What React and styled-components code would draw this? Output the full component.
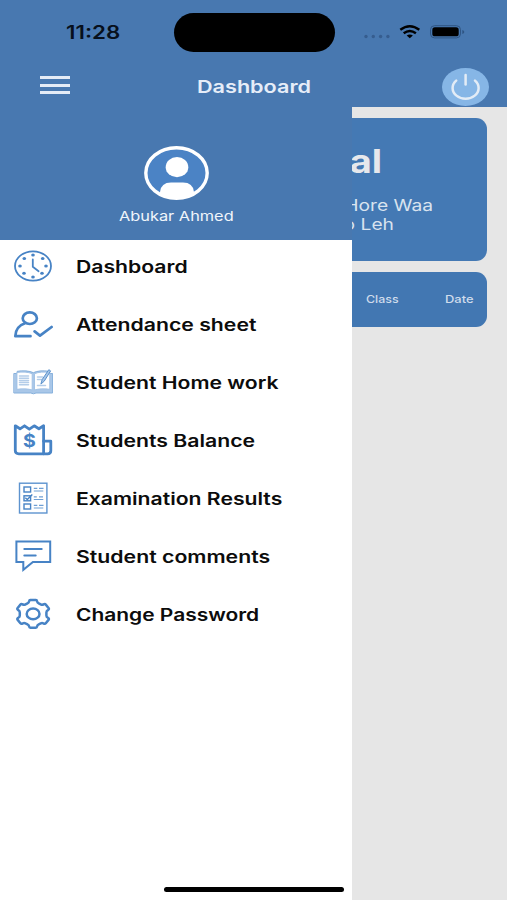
import React from "react";
import styled, { createGlobalStyle } from "styled-components";

const GlobalStyle = createGlobalStyle`
  * {
    box-sizing: border-box;
  }
  body {
    margin: 0;
    font-family: Inter, "Liberation Sans", sans-serif;
  }
`;

const Screen = styled.div`
  position: relative;
  width: 507px;
  height: 900px;
  overflow: hidden;
  background: #e6e6e6;
`;

const Header = styled.header`
  height: 107px;
  background: #4878b0;
`;

const StatusBar = styled.div`
  display: flex;
  height: 64px;
  padding-left: 66px;
  align-items: center;
`;

const Island = styled.div`
  width: 161px;
  height: 39px;
  border-radius: 20px;
  background: #000;
`;

const StatusIcons = styled.svg`
  width: 104px;
  height: 20px;
  margin-left: 27px;
`;

const TitleBar = styled.div`
  display: flex;
  height: 44px;
  padding: 0 18px 0 40px;
  align-items: center;
`;

const Slot = styled.div`
  flex: none;
  width: ${(p) => p.$width}px;
`;

// widened type: $x is the horizontal stretch of the glyphs
const Wide = styled.span`
  display: block;
  width: max-content;
  padding-top: ${(p) => p.$drop || 0}px;
  white-space: nowrap;
  line-height: 1;
  color: ${(p) => p.$color || "#0c0c0c"};
  font-size: ${(p) => p.$size}px;
  font-weight: ${(p) => p.$weight || 600};
  transform: scaleX(${(p) => p.$x || 1.2});
  transform-origin: ${(p) => p.$origin || "left"} center;
`;

const MenuButton = styled.button`
  display: flex;
  flex-direction: column;
  gap: 4.4px;
  width: 30px;
  margin: -2px 0 0;
  padding: 0;
  border: 0;
  background: none;
`;

const MenuLine = styled.span`
  height: 3px;
  background: #e4ebf6;
`;

const PowerButton = styled.button`
  width: 47px;
  height: 38px;
  margin: 1px 0 0 auto;
  padding: 0;
  border: 0;
  background: none;

  svg {
    display: block;
  }
`;

const Content = styled.main`
  display: flex;
  flex-direction: column;
  gap: 11px;
  padding: 11px 20px 0;
`;

const Card = styled.section`
  display: flex;
  flex-direction: column;
  align-items: flex-end;
  height: 143px;
  padding-top: 27px;
  border-radius: 11px;
  background: #4479b4;
`;

const CardLine = styled.div`
  padding-right: ${(p) => p.$right}px;
  margin-top: ${(p) => p.$top || 0}px;
`;

const TableHead = styled.section`
  display: flex;
  justify-content: flex-end;
  align-items: center;
  gap: 46px;
  height: 55px;
  padding-right: 13px;
  border-radius: 11px;
  background: #4277b2;
`;

const Cell = styled.div`
  width: ${(p) => p.$width}px;
`;

const Drawer = styled.aside`
  position: absolute;
  top: 107px;
  left: 0;
  width: 352px;
  height: 793px;
  background: #fff;
`;

const Profile = styled.div`
  display: flex;
  flex-direction: column;
  align-items: center;
  height: 133px;
  padding-top: 39px;
  background: #4878b0;

  svg {
    flex: none;
    margin-bottom: 10px;
  }
`;

const Nav = styled.nav`
  display: flex;
  flex-direction: column;
  gap: 10px;
  padding: 2px 0 0 13px;
`;

const NavItem = styled.div`
  display: flex;
  align-items: center;
  gap: 23px;
  height: 48px;
`;

const Icon = styled.svg`
  flex: none;
  width: 40px;
  height: 40px;
  fill: none;
  stroke: #4783c5;
  stroke-width: ${(p) => p.$stroke || 2};
  stroke-linecap: ${(p) => p.$cap || "round"};
  stroke-linejoin: ${(p) => p.$join || "round"};
`;

const HomeBar = styled.div`
  position: absolute;
  left: 164px;
  bottom: 8px;
  width: 180px;
  height: 5px;
  border-radius: 3px;
  background: #000;
`;

const clockDots = [
  [20, 9],
  [20, 31],
  [7, 20],
  [33, 20],
  [11.3, 12.5],
  [29.7, 12.5],
  [11, 27.3],
  [29, 27.3],
];

const ClockIcon = () => (
  <Icon viewBox="0 0 40 40" $stroke={1.8}>
    <ellipse cx="20" cy="20" rx="18" ry="14.7" />
    <path d="M19.8 13.5v7.3l5.8 4.4" />
    <g fill="#4783c5" stroke="none">
      {clockDots.map(([x, y]) => (
        <ellipse key={`${x}-${y}`} cx={x} cy={y} rx="1.8" ry="1.5" />
      ))}
    </g>
  </Icon>
);

const AttendanceIcon = () => (
  <Icon viewBox="0 0 40 40" $stroke={2.7}>
    <ellipse cx="16.8" cy="14.2" rx="7.1" ry="5.8" />
    <path d="M17.500 32.200H2.300C2.500 25.500 6 21.200 12 19.200" />
    <path d="M21.600 27.400l5.400 4.200 11.600-8.600" />
  </Icon>
);

const BookIcon = () => (
  <Icon viewBox="0 0 40 40" $stroke={1}>
    <path d="M1.2 11.5h3V9.3c6-.8 12-.6 16.2 1.4 4-2 9.5-2.2 15.5-1.4v2.200h3.700v19.500H23l-2.600.8-2.600-.8H1.200z" fill="#a9c7e8" stroke="#86b0dc" />
    <path d="M4.200 10.500c5-.8 11-.6 15 1.200v16.300c-4-1.300-10-1.400-15-.7zM36.500 10.500c-5-.8-11-.6-15 1.200v16.300c4-1.300 10-1.400 15-.7z" fill="#fff" stroke="#a3c3e6" />
    <path d="M6.500 14h9M6.500 16.200h9M6.500 18.400h9M6.500 20.600h9M6.500 22.800h9M24.500 15h5M24.500 17.500h4M24.500 23.500h8" stroke="#b4cde9" strokeWidth="1.500" />
    <path d="M28 21.700l1.200-4.200 6.600-9.800 1.800 1.200-6.200 10z" fill="#a9c7e8" stroke="#5a92cd" />
  </Icon>
);

const BalanceIcon = () => (
  <Icon viewBox="0 0 40 40" $stroke={2.8}>
    <path d="M2.300 5.800l4.700 3 4.500-3 4.800 3.400 4.900-3.400 4.700 3 4.700-3v28H5.800q-3.500 0-3.500-3z" />
    <path d="M30.600 21.200h7.200v9.600q0 3-3.200 3h-4" />
    <text
      y="6.300"
      transform="translate(16.300 20.500) scale(1.120 1)"
      textAnchor="middle"
      fontSize="17.500"
      fontWeight="700"
      fill="#4783c5"
      stroke="none"
    >
      $
    </text>
  </Icon>
);

const ExamIcon = () => (
  <Icon viewBox="0 0 40 40" $stroke={1.4} $join="miter" $cap="butt">
    <rect x="6.500" y="5.200" width="27.400" height="29.800" stroke="#5d93cf" />
    <rect x="11" y="9" width="6.600" height="5" />
    <rect x="11" y="17.800" width="6.600" height="5" />
    <rect x="11" y="26" width="6.600" height="5" />
    <path d="M12.300 19.800l2 1.800 5-5" />
    <path d="M20.800 10.300h3.500M26 10.300h4.500M20.800 13h9.500M20.800 18.800h3M26 18.800h4M20.800 21.500h9.500M20.800 27.300h3.500M26 27.300h4.500M20.800 30h9.500" stroke="#6f9fd4" strokeWidth="1.200" />
  </Icon>
);

const CommentIcon = () => (
  <Icon viewBox="0 0 40 40" $stroke={2} $join="miter">
    <path d="M10.300 26H3.400V5.500h33.800V26H19.900L10.300 33.800z" />
    <path d="M11.300 13h17.400M11.300 19.500h11.400" />
  </Icon>
);

const GearIcon = () => (
  <Icon viewBox="0 0 40 40" $stroke={2.500}>
    <path d="M17.300 6h5.600q1 0 1.200 1.400.2 1.400 1.600 2l2 1q1.300.7 2.600.1 1.700-.8 2.500.1l2.900 3.600q.6 1-.8 1.900-1.500.9-1.500 2.300v3q0 1.400 1.500 2.300 1.400.9.800 1.900l-2.900 3.600q-.8.9-2.500.1-1.300-.6-2.600.1l-2 1q-1.400.6-1.600 2-.2 1.400-1.200 1.400h-5.600q-1 0-1.200-1.400-.2-1.400-1.600-2l-2-1q-1.300-.7-2.600-.1-1.700.8-2.500-.1l-2.900-3.600q-.6-1 .8-1.900 1.500-.9 1.500-2.300v-3q0-1.400-1.500-2.300-1.400-.9-.8-1.900l2.900-3.600q.8-.9 2.500-.1 1.300.6 2.600-.1l2-1q1.400-.6 1.600-2 .2-1.400 1.200-1.400z" />
    <ellipse cx="20.100" cy="19.900" rx="6.400" ry="5.300" />
  </Icon>
);

const items = [
  { label: "Dashboard", icon: ClockIcon, x: 1.245 },
  { label: "Attendance sheet", icon: AttendanceIcon, x: 1.248 },
  { label: "Student Home work", icon: BookIcon, x: 1.246 },
  { label: "Students Balance", icon: BalanceIcon, x: 1.248 },
  { label: "Examination Results", icon: ExamIcon, x: 1.245 },
  { label: "Student comments", icon: CommentIcon, x: 1.25 },
  { label: "Change Password", icon: GearIcon, x: 1.232 },
];

export default function App() {
  return (
    <Screen>
      <GlobalStyle />
      <Header>
        <StatusBar>
          <Slot $width={107.5}>
            <Wide $size={18} $x={1.24} $drop={1} $color="#07101c">11:28</Wide>
          </Slot>
          <Island />
          <StatusIcons viewBox="0 0 104 20">
            <g fill="#365d8f">
              <circle cx="4" cy="14.500" r="1.700" />
              <circle cx="11.300" cy="14.500" r="1.700" />
              <circle cx="18.600" cy="14.500" r="1.700" />
              <circle cx="25.900" cy="14.500" r="1.700" />
            </g>
            <g fill="none" stroke="#000" strokeWidth="2.400">
              <path d="M38.300 7.800q9.500-7.200 19 0" />
              <path d="M41.700 11.300q6.100-4.600 12.200 0" />
            </g>
            <path d="M44.700 13.600q3.100-2 6.200 0l-3.100 2.700z" />
            <rect x="68.500" y="3.700" width="30" height="12.200" rx="4" fill="none" stroke="#2f5583" />
            <rect x="70.300" y="5.300" width="26.400" height="9" rx="2.600" />
            <path d="M100.300 8v4q2-.6 2-2t-2-2z" fill="#2f5583" />
          </StatusIcons>
        </StatusBar>
        <TitleBar>
          <Slot $width={157}>
            <MenuButton aria-label="Menu">
              <MenuLine />
              <MenuLine />
              <MenuLine />
            </MenuButton>
          </Slot>
          <Wide $size={17.5} $x={1.235} $drop={2} $color="#e6edf8">Dashboard</Wide>
          <PowerButton aria-label="Log out">
            <svg width="47" height="38" viewBox="0 0 47 38">
              <ellipse cx="23.500" cy="19" rx="23.500" ry="19" fill="#86b6e6" />
              <g fill="none" stroke="#e3ecf6" strokeWidth="2.500" strokeLinecap="round">
                <path d="M14.200 12.600A13 10.700 0 1 0 33 12.600" />
                <path d="M23.600 7v9.500" />
              </g>
            </svg>
          </PowerButton>
        </TitleBar>
      </Header>

      <Content>
        <Card>
          <CardLine $right={104.5}>
            <Wide $size={33} $weight={700} $x={1.15} $color="#e6e8ec" $origin="right">al</Wide>
          </CardLine>
          <CardLine $right={54} $top={19}>
            <Wide $size={16} $weight={400} $x={1.2} $color="#d9e3ef" $origin="right">Hore Waa</Wide>
          </CardLine>
          <CardLine $right={93} $top={3}>
            <Wide $size={16} $weight={400} $x={1.2} $color="#d9e3ef" $origin="right">o Leh</Wide>
          </CardLine>
        </Card>
        <TableHead>
          <Cell $width={33.5}>
            <Wide $size={10.5} $weight={500} $x={1.18} $drop={2} $color="#cfdcec">Class</Wide>
          </Cell>
          <Cell $width={29}>
            <Wide $size={10.5} $weight={500} $x={1.23} $drop={2} $color="#cfdcec">Date</Wide>
          </Cell>
        </TableHead>
      </Content>

      <Drawer>
        <Profile>
          <svg width="65" height="54" viewBox="0 0 65 54">
            <defs>
              <clipPath id="face">
                <ellipse cx="32.500" cy="27" rx="31.500" ry="26" />
              </clipPath>
            </defs>
            <ellipse cx="32.500" cy="27" rx="30.700" ry="25.200" fill="#4b83c5" stroke="#fff" strokeWidth="3.400" />
            <ellipse cx="33" cy="21.200" rx="11.300" ry="10.100" fill="#fff" />
            <path clipPath="url(#face)" d="M16 54v-8q1-9.500 11-9.500h12q10 0 11 9.500v8z" fill="#fff" />
          </svg>
          <Wide $size={13.5} $weight={400} $x={1.21} $color="#f0f5fb" $origin="center">Abukar Ahmed</Wide>
        </Profile>
        <Nav>
          {items.map(({ label, icon: ItemIcon, x }) => (
            <NavItem key={label}>
              <ItemIcon />
              <Wide $size={17} $x={x} $drop={2}>{label}</Wide>
            </NavItem>
          ))}
        </Nav>
      </Drawer>
      <HomeBar />
    </Screen>
  );
}
